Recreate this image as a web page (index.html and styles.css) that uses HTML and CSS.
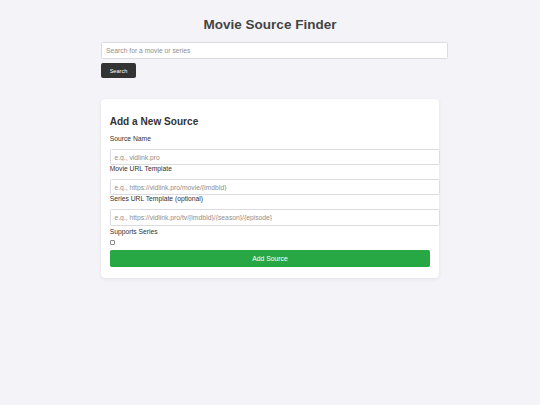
FILE: index.html
```html
<!DOCTYPE html>
<html lang="en">
<head>
<meta charset="utf-8">
<title>Movie Source Finder</title>
<link rel="stylesheet" href="styles.css">
</head>
<body>
<main class="page">
  <h1 class="title">Movie Source Finder</h1>
  <section class="search">
    <input class="search-input" type="text" placeholder="Search for a movie or series">
    <button class="search-btn" type="button">Search</button>
  </section>
  <section class="card">
    <h2 class="card-title">Add a New Source</h2>
    <form class="source-form">
      <label class="field-label" for="name">Source Name</label>
      <input class="field-input" id="name" type="text" placeholder="e.g., vidlink.pro">
      <label class="field-label" for="movie">Movie URL Template</label>
      <input class="field-input" id="movie" type="text" placeholder="e.g., https://vidlink.pro/movie/{imdbId}">
      <label class="field-label" for="series">Series URL Template (optional)</label>
      <input class="field-input" id="series" type="text" placeholder="e.g., https://vidlink.pro/tv/{imdbId}/{season}/{episode}">
      <label class="field-label check-label" for="supports">Supports Series</label>
      <input class="check" id="supports" type="checkbox">
      <button class="add-btn" type="button">Add Source</button>
    </form>
  </section>
</main>
</body>
</html>
```
FILE: styles.css
```css
* {
  font-family: "Liberation Sans", Arial, sans-serif;
}

body {
  margin: 0;
  padding: 8.4px;
  background: #f4f4f8;
  color: #333;
}

.page {
  max-width: 337.5px;
  margin: 0 auto;
}

.title {
  margin: 9px 0 10px;
  font-size: 13.5px;
  font-weight: bold;
  text-align: center;
  color: #444;
  line-height: 15.1px;
}

.search-input {
  display: block;
  width: 100%;
  margin: 0;
  padding: 3.6px 3.8px;
  border: 1px solid #dcdce0;
  border-radius: 1.5px;
  background: #fff;
  font-size: 6.75px;
  line-height: 7.8px;
  color: #333;
  outline: none;
}

.search-input::placeholder,
.field-input::placeholder {
  color: #8f8f8f;
}

.search-btn {
  display: block;
  margin-top: 4.6px;
  height: 14.7px;
  padding: 0 8.4px;
  border: none;
  border-radius: 2px;
  background: #333;
  color: #fff;
  font-size: 5.6px;
}

.card {
  margin-top: 21px;
  padding: 8.4px;
  background: #fff;
  border-radius: 4.2px;
  box-shadow: 0 1px 4px rgba(0, 0, 0, 0.07);
}

.card-title {
  margin: 8.4px 0 8.2px;
  font-size: 10.1px;
  line-height: 11.3px;
  font-weight: bold;
  color: #333;
}

.source-form {
  margin: 0;
}

.field-label {
  display: block;
  font-size: 6.75px;
  line-height: 7.5px;
  color: #333;
}

.field-input {
  display: block;
  width: 100%;
  margin: 6px 0 0;
  padding: 3.8px 3.8px;
  border: 1px solid #dcdce0;
  border-radius: 1.5px;
  background: #fff;
  font-size: 6.75px;
  line-height: 6.4px;
  color: #333;
  outline: none;
}

.check-label {
  margin-top: 2.6px;
}

.check {
  display: block;
  appearance: none;
  -webkit-appearance: none;
  width: 5px;
  height: 5px;
  margin: 4px 0 0 0;
  border: 1px solid #8a8a8a;
  border-radius: 1px;
  background: #fff;
}

.add-btn {
  display: block;
  width: 100%;
  height: 17.4px;
  margin: 5.3px 0 2px;
  padding: 0;
  border: none;
  border-radius: 1.7px;
  background: #28a745;
  color: #fff;
  font-size: 6.75px;
}
```
